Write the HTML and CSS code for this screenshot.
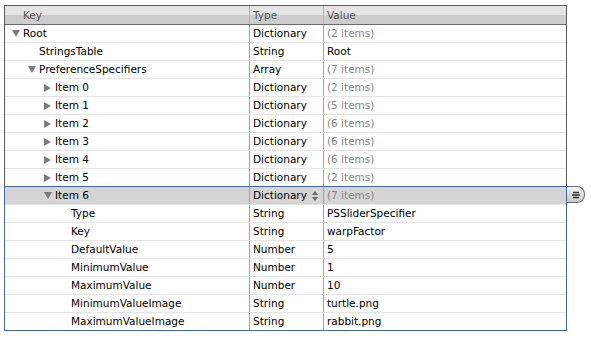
FILE: index.html
```html
<!DOCTYPE html>
<html>
<head>
    <meta charset="UTF-8">
    <title>Settings.bundle Root.plist</title>
    <link rel="stylesheet" href="styles.css">
</head>
<body>
    <div class="plist">
        <div class="plist-top">
            <div class="row header">
                <div class="cell key">Key</div>
                <div class="cell type">Type</div>
                <div class="cell value">Value</div>
            </div>

            <div class="row">
                <div class="cell key l0"><span class="toggle open"></span>Root</div>
                <div class="cell type">Dictionary</div>
                <div class="cell value muted">(2 items)</div>
            </div>
            <div class="row">
                <div class="cell key l1"><span class="toggle"></span>StringsTable</div>
                <div class="cell type">String</div>
                <div class="cell value">Root</div>
            </div>
            <div class="row">
                <div class="cell key l1"><span class="toggle open"></span>PreferenceSpecifiers</div>
                <div class="cell type">Array</div>
                <div class="cell value muted">(7 items)</div>
            </div>
            <div class="row">
                <div class="cell key l2"><span class="toggle closed"></span>Item 0</div>
                <div class="cell type">Dictionary</div>
                <div class="cell value muted">(2 items)</div>
            </div>
            <div class="row">
                <div class="cell key l2"><span class="toggle closed"></span>Item 1</div>
                <div class="cell type">Dictionary</div>
                <div class="cell value muted">(5 items)</div>
            </div>
            <div class="row">
                <div class="cell key l2"><span class="toggle closed"></span>Item 2</div>
                <div class="cell type">Dictionary</div>
                <div class="cell value muted">(6 items)</div>
            </div>
            <div class="row">
                <div class="cell key l2"><span class="toggle closed"></span>Item 3</div>
                <div class="cell type">Dictionary</div>
                <div class="cell value muted">(6 items)</div>
            </div>
            <div class="row">
                <div class="cell key l2"><span class="toggle closed"></span>Item 4</div>
                <div class="cell type">Dictionary</div>
                <div class="cell value muted">(6 items)</div>
            </div>
            <div class="row last">
                <div class="cell key l2"><span class="toggle closed"></span>Item 5</div>
                <div class="cell type">Dictionary</div>
                <div class="cell value muted">(2 items)</div>
            </div>
        </div>

        <div class="plist-group">
            <div class="row selected">
                <div class="cell key l2"><span class="toggle open"></span>Item 6</div>
                <div class="cell type">
                    Dictionary
                    <svg class="stepper" width="6" height="10" viewBox="0 0 6 10">
                        <path d="M3 0 L6 4 L0 4 Z" fill="#6b6b6b"/>
                        <path d="M0 6 L6 6 L3 10 Z" fill="#6b6b6b"/>
                    </svg>
                </div>
                <div class="cell value muted">(7 items)</div>
                <div class="row-menu">
                    <svg width="10" height="8" viewBox="0 0 10 8">
                        <path d="M2 1.5 H8 M1 4 H9 M2 6.5 H8" stroke="#333" stroke-width="1.3"/>
                    </svg>
                </div>
            </div>
            <div class="row">
                <div class="cell key l3"><span class="toggle"></span>Type</div>
                <div class="cell type">String</div>
                <div class="cell value">PSSliderSpecifier</div>
            </div>
            <div class="row">
                <div class="cell key l3"><span class="toggle"></span>Key</div>
                <div class="cell type">String</div>
                <div class="cell value">warpFactor</div>
            </div>
            <div class="row">
                <div class="cell key l3"><span class="toggle"></span>DefaultValue</div>
                <div class="cell type">Number</div>
                <div class="cell value">5</div>
            </div>
            <div class="row">
                <div class="cell key l3"><span class="toggle"></span>MinimumValue</div>
                <div class="cell type">Number</div>
                <div class="cell value">1</div>
            </div>
            <div class="row">
                <div class="cell key l3"><span class="toggle"></span>MaximumValue</div>
                <div class="cell type">Number</div>
                <div class="cell value">10</div>
            </div>
            <div class="row">
                <div class="cell key l3"><span class="toggle"></span>MinimumValueImage</div>
                <div class="cell type">String</div>
                <div class="cell value">turtle.png</div>
            </div>
            <div class="row last">
                <div class="cell key l3"><span class="toggle"></span>MaximumValueImage</div>
                <div class="cell type">String</div>
                <div class="cell value">rabbit.png</div>
            </div>
        </div>
    </div>
</body>
</html>
```

FILE: styles.css
```css
body {
    margin: 0;
    padding: 5px 0 0 4px;
    background: #fff;
    font-family: "DejaVu Sans", "Open Sans", sans-serif;
    font-size: 10.5px;
    color: #000;
}

.plist {
    width: 563px;
}

.plist-top {
    border: 1px solid #5a5a5a;
    border-bottom: none;
}

.plist-group {
    border: 1px solid #3f69ae;
}

.row {
    display: grid;
    grid-template-columns: 245px 74px 1fr;
    height: 17px;
    border-bottom: 1px solid #e4e4e4;
    line-height: 17px;
}

.row.last {
    border-bottom: none;
}

.cell {
    display: flex;
    align-items: center;
    padding-left: 3px;
    border-right: 1px solid #a3a3a3;
    white-space: nowrap;
    overflow: hidden;
}

.cell.value {
    border-right: none;
}

.muted {
    color: #858585;
}

/* header */
.row.header {
    height: 18px;
    line-height: 18px;
    border-bottom: 1px solid #6a6a6a;
    background: linear-gradient(#e5e5e5 50%, #cdcdcd 50%);
    color: #555;
}

.row.header .cell {
    border-right-color: #b3b3b3;
}

.row.header .key {
    padding-left: 18px;
}

/* tree indentation */
.key.l0 { padding-left: 7px; }
.key.l1 { padding-left: 23px; }
.key.l2 { padding-left: 39px; }
.key.l3 { padding-left: 55px; }

.toggle {
    display: inline-block;
    flex: none;
    width: 11px;
    height: 8px;
    box-sizing: border-box;
}

.toggle.open {
    width: 0;
    height: 0;
    margin-right: 3px;
    border-left: 4px solid transparent;
    border-right: 4px solid transparent;
    border-top: 7px solid #7b7b7b;
}

.toggle.closed {
    width: 0;
    height: 0;
    margin-right: 4px;
    border-top: 4px solid transparent;
    border-bottom: 4px solid transparent;
    border-left: 7px solid #7b7b7b;
}

/* selected row */
.row.selected {
    position: relative;
    background: #d5d5d5;
}

.row.selected .type {
    justify-content: space-between;
    padding-right: 5px;
}

.row-menu {
    position: absolute;
    left: calc(100% + 1px);
    top: -1px;
    width: 18px;
    height: 17px;
    box-sizing: border-box;
    display: flex;
    align-items: center;
    justify-content: center;
    border: 1px solid #6d6d6d;
    border-left: none;
    border-radius: 0 8px 8px 0;
    background: linear-gradient(#f3f3f3, #c9c9c9);
}
```
